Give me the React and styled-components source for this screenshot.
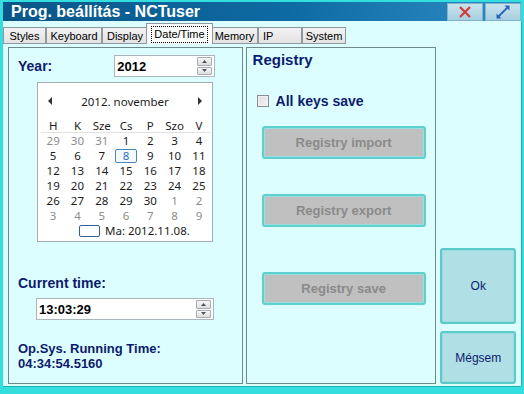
import React from "react";
import styled, { createGlobalStyle } from "styled-components";

const Global = createGlobalStyle`
  html, body { margin: 0; padding: 0; background: #ffffff; }
  body { font-family: "Liberation Sans", Arial, sans-serif; }
  * { box-sizing: border-box; }
`;

const Window = styled.div`
  width: 524px;
  height: 394px;
  background: #34dede;
  padding: 2px 3px 0 3px;
  display: flex;
  flex-direction: column;
`;

const TitleBar = styled.div`
  height: 19px;
  display: flex;
  align-items: center;
  background: linear-gradient(to right, #0a5687 0%, #0e6aa3 55%, #2f8cc4 100%);
  padding-left: 8px;
`;

const Title = styled.div`
  flex: 1;
  color: #ffffff;
  font-size: 16px;
  font-weight: bold;
  line-height: 19px;
`;

const CaptionButton = styled.div`
  width: 36px;
  height: 18px;
  margin-left: 2px;
  display: flex;
  align-items: center;
  justify-content: center;
  background: linear-gradient(to bottom, #c9e3ee 0%, #a9cfe0 100%);
  border: 1px solid #7fb3cc;
`;

const Body = styled.div`
  flex: 1;
  display: flex;
  flex-direction: column;
  background: #ddfefe;
  margin-bottom: 8px;
  box-shadow: 0 1px 0 #1fb0b0, 1px 0 0 #1fb0b0;
`;

const TabStrip = styled.div`
  height: 23px;
  display: flex;
  align-items: flex-end;
`;

const Tab = styled.div`
  width: ${(p) => p.w}px;
  height: ${(p) => (p.active ? 21 : 17)}px;
  margin: 0 ${(p) => (p.active ? -2 : 0)}px;
  position: relative;
  z-index: ${(p) => (p.active ? 2 : 1)};
  display: flex;
  align-items: center;
  justify-content: ${(p) => (p.left ? "flex-start" : "center")};
  padding-left: ${(p) => (p.left ? 4 : 0)}px;
  font-size: 11px;
  color: #000;
  background: ${(p) =>
    p.active ? "#fcfcfc" : "linear-gradient(to bottom, #f2f2f2 0%, #e3e3e3 100%)"};
  border: 1px solid #8d9aa0;
  border-bottom: ${(p) => (p.active ? "none" : "1px solid #8d9aa0")};
`;

const Focus = styled.span`
  border: 1px dotted #000;
  padding: 1px 2px;
  line-height: 13px;
`;

const Content = styled.div`
  flex: 1;
  display: flex;
  padding: 3px 5px 2px 5px;
  gap: 3px;
`;

const Group = styled.div`
  width: ${(p) => p.w}px;
  border: 1px solid #6f8a8a;
  display: flex;
  flex-direction: column;
  padding-left: ${(p) => p.pl}px;
`;

const Label = styled.div`
  color: #0d1b6e;
  font-weight: bold;
  font-size: ${(p) => p.size || 14}px;
  line-height: ${(p) => (p.size || 14) + 2}px;
  margin-top: ${(p) => p.mt || 0}px;
`;

const YearRow = styled.div`
  display: flex;
  align-items: center;
  margin-top: 7px;
  height: 22px;
`;

const Input = styled.div`
  width: ${(p) => p.w}px;
  height: ${(p) => p.h}px;
  margin-left: ${(p) => p.ml}px;
  margin-top: ${(p) => p.mt || 0}px;
  background: #ffffff;
  border: 1px solid #a9b6bb;
  display: flex;
  align-items: center;
  justify-content: space-between;
  padding: 0 2px 0 2px;
  font-size: 13px;
  font-weight: bold;
  color: #000;
`;

const Spinner = styled.div`
  width: 15px;
  height: 18px;
  display: flex;
  flex-direction: column;
  gap: 1px;
`;

const SpinHalf = styled.div`
  flex: 1;
  border: 1px solid #a7adb3;
  border-radius: 1px;
  background: linear-gradient(to bottom, #f6f6f6, #dedede);
  display: flex;
  align-items: center;
  justify-content: center;
`;

const Tri = ({ up }) => (
  <svg width="5" height="3" viewBox="0 0 5 3">
    <path d={up ? "M0 3 L2.5 0 L5 3 Z" : "M0 0 L2.5 3 L5 0 Z"} fill="#4d5560" />
  </svg>
);

const Spin = () => (
  <Spinner>
    <SpinHalf><Tri up /></SpinHalf>
    <SpinHalf><Tri /></SpinHalf>
  </Spinner>
);

const Calendar = styled.div`
  width: 176px;
  height: 160px;
  margin-left: 19px;
  margin-top: 5px;
  background: #ffffff;
  border: 1px solid #a5acb2;
  font-family: "Noto Sans", "Open Sans", sans-serif;
  font-size: 11.5px;
  color: #1c1c1c;
  display: flex;
  flex-direction: column;
  padding: 10px 3px 0 3px;
`;

const CalHeader = styled.div`
  display: flex;
  align-items: center;
  justify-content: space-between;
  height: 16px;
  padding: 0 7px 0 7px;
`;

const DayGrid = styled.div`
  display: grid;
  grid-template-columns: repeat(7, 24.3px);
  grid-auto-rows: 15px;
  margin-top: 9px;
`;

const DayName = styled.div`
  text-align: center;
  line-height: 15px;
  border-bottom: ${(p) => (p.line ? "1px solid #e2e2e2" : "none")};
`;

const Day = styled.div`
  display: flex;
  align-items: center;
  justify-content: center;
  line-height: 15px;
  color: ${(p) => (p.dim ? "#8d8d8d" : p.sel ? "#2f6fb5" : "#1c1c1c")};
`;

const SelBox = styled.span`
  display: inline-flex;
  align-items: center;
  justify-content: center;
  width: 22px;
  height: 14px;
  border: 1px solid #4a86bd;
  border-radius: 2px;
  background: #f4f9fd;
`;

const CalFooter = styled.div`
  display: flex;
  align-items: center;
  margin-top: 0px;
  padding-left: 38px;
  gap: 5px;
  height: 15px;
`;

const TodayBox = styled.span`
  width: 21px;
  height: 12px;
  border: 1px solid #2f5f98;
  border-radius: 2px;
`;

const RightGroupInner = styled.div`
  display: flex;
  flex-direction: column;
`;

const CheckRow = styled.div`
  display: flex;
  align-items: center;
  margin-top: 25px;
  margin-left: 4px;
  gap: 7px;
`;

const CheckBox = styled.span`
  width: 12px;
  height: 12px;
  border: 1px solid #8a8f94;
  background: linear-gradient(135deg, #dcdcdc, #f6f6f6);
  box-shadow: inset 0 0 0 1px #f0f0f0;
`;

const RegButton = styled.div`
  width: 164px;
  height: 33px;
  margin-left: 9px;
  margin-top: ${(p) => p.mt}px;
  background: #c0c0c0;
  border: 2px solid #5fcfcf;
  border-radius: 3px;
  box-shadow: inset 0 0 0 1px #9adede;
  display: flex;
  align-items: center;
  justify-content: center;
  color: #8a8a8a;
  font-weight: bold;
  font-size: 13px;
`;

const SideColumn = styled.div`
  width: 76px;
  margin-left: 1px;
  display: flex;
  flex-direction: column;
  justify-content: flex-end;
  gap: 7px;
`;

const SideButton = styled.div`
  height: ${(p) => p.h}px;
  background: #b0dfe5;
  border: 2px solid #5ccaca;
  border-radius: 3px;
  box-shadow: inset 0 0 0 1px #9adcdc;
  display: flex;
  align-items: center;
  justify-content: center;
  color: #0d1b6e;
  font-size: 12px;
`;

const rows = [
  [[29, 1], [30, 1], [31, 1], [1], [2], [3], [4]],
  [[5], [6], [7], [8, 0, 1], [9], [10], [11]],
  [[12], [13], [14], [15], [16], [17], [18]],
  [[19], [20], [21], [22], [23], [24], [25]],
  [[26], [27], [28], [29], [30], [1, 1], [2, 1]],
  [[3, 1], [4, 1], [5, 1], [6, 1], [7, 1], [8, 1], [9, 1]],
];

const tabs = [
  { t: "Styles", w: 43 },
  { t: "Keyboard", w: 56 },
  { t: "Display", w: 46 },
  { t: "Date/Time", w: 67, active: true },
  { t: "Memory", w: 47 },
  { t: "IP", w: 44, left: true },
  { t: "System", w: 44 },
];

export default function App() {
  return (
    <>
      <Global />
      <Window>
        <TitleBar>
          <Title>Prog. beállítás - NCTuser</Title>
          <CaptionButton>
            <svg width="14" height="12" viewBox="0 0 14 12">
              <path d="M2 1 L12 11 M12 1 L2 11" stroke="#d23a3a" strokeWidth="2.2" />
            </svg>
          </CaptionButton>
          <CaptionButton>
            <svg width="16" height="14" viewBox="0 0 16 14">
              <path d="M2.5 12.5 L13.5 1.5" stroke="#2a64b8" strokeWidth="1.8" />
              <path d="M1.5 13.5 L1.5 8.5 L6.5 13.5 Z" fill="#2a64b8" />
              <path d="M14.5 0.5 L14.5 5.5 L9.5 0.5 Z" fill="#2a64b8" />
            </svg>
          </CaptionButton>
        </TitleBar>
        <Body>
          <TabStrip>
            {tabs.map((tb) => (
              <Tab key={tb.t} w={tb.w} active={tb.active} left={tb.left}>
                {tb.active ? <Focus>{tb.t}</Focus> : tb.t}
              </Tab>
            ))}
          </TabStrip>
          <Content>
            <Group w={236} pl={9}>
              <YearRow>
                <Label>Year:</Label>
                <Input w={101} h={22} ml={62}>
                  <span>2012</span>
                  <Spin />
                </Input>
              </YearRow>
              <Calendar>
                <CalHeader>
                  <svg width="4" height="8" viewBox="0 0 4 8"><path d="M4 0 L0 4 L4 8 Z" fill="#333" /></svg>
                  <span>2012. november</span>
                  <svg width="4" height="8" viewBox="0 0 4 8"><path d="M0 0 L4 4 L0 8 Z" fill="#333" /></svg>
                </CalHeader>
                <DayGrid>
                  {["H", "K", "Sze", "Cs", "P", "Szo", "V"].map((d) => (
                    <DayName key={d} line>{d}</DayName>
                  ))}
                  {rows.flat().map(([n, dim, sel], i) => (
                    <Day key={i} dim={dim} sel={sel}>
                      {sel ? <SelBox>{n}</SelBox> : n}
                    </Day>
                  ))}
                </DayGrid>
                <CalFooter>
                  <TodayBox />
                  <span>Ma: 2012.11.08.</span>
                </CalFooter>
              </Calendar>
              <Label mt={33}>Current time:</Label>
              <Input w={178} h={22} ml={18} mt={7}>
                <span>13:03:29</span>
                <Spin />
              </Input>
              <Label size={13} mt={21}>Op.Sys. Running Time:</Label>
              <Label size={13}>04:34:54.5160</Label>
            </Group>
            <Group w={192} pl={6}>
              <RightGroupInner>
                <Label size={15} mt={3}>Registry</Label>
                <CheckRow>
                  <CheckBox />
                  <Label>All keys save</Label>
                </CheckRow>
                <RegButton mt={17}>Registry import</RegButton>
                <RegButton mt={35}>Registry export</RegButton>
                <RegButton mt={45}>Registry save</RegButton>
              </RightGroupInner>
            </Group>
            <SideColumn>
              <SideButton h={76}>Ok</SideButton>
              <SideButton h={53}>Mégsem</SideButton>
            </SideColumn>
          </Content>
        </Body>
      </Window>
    </>
  );
}
